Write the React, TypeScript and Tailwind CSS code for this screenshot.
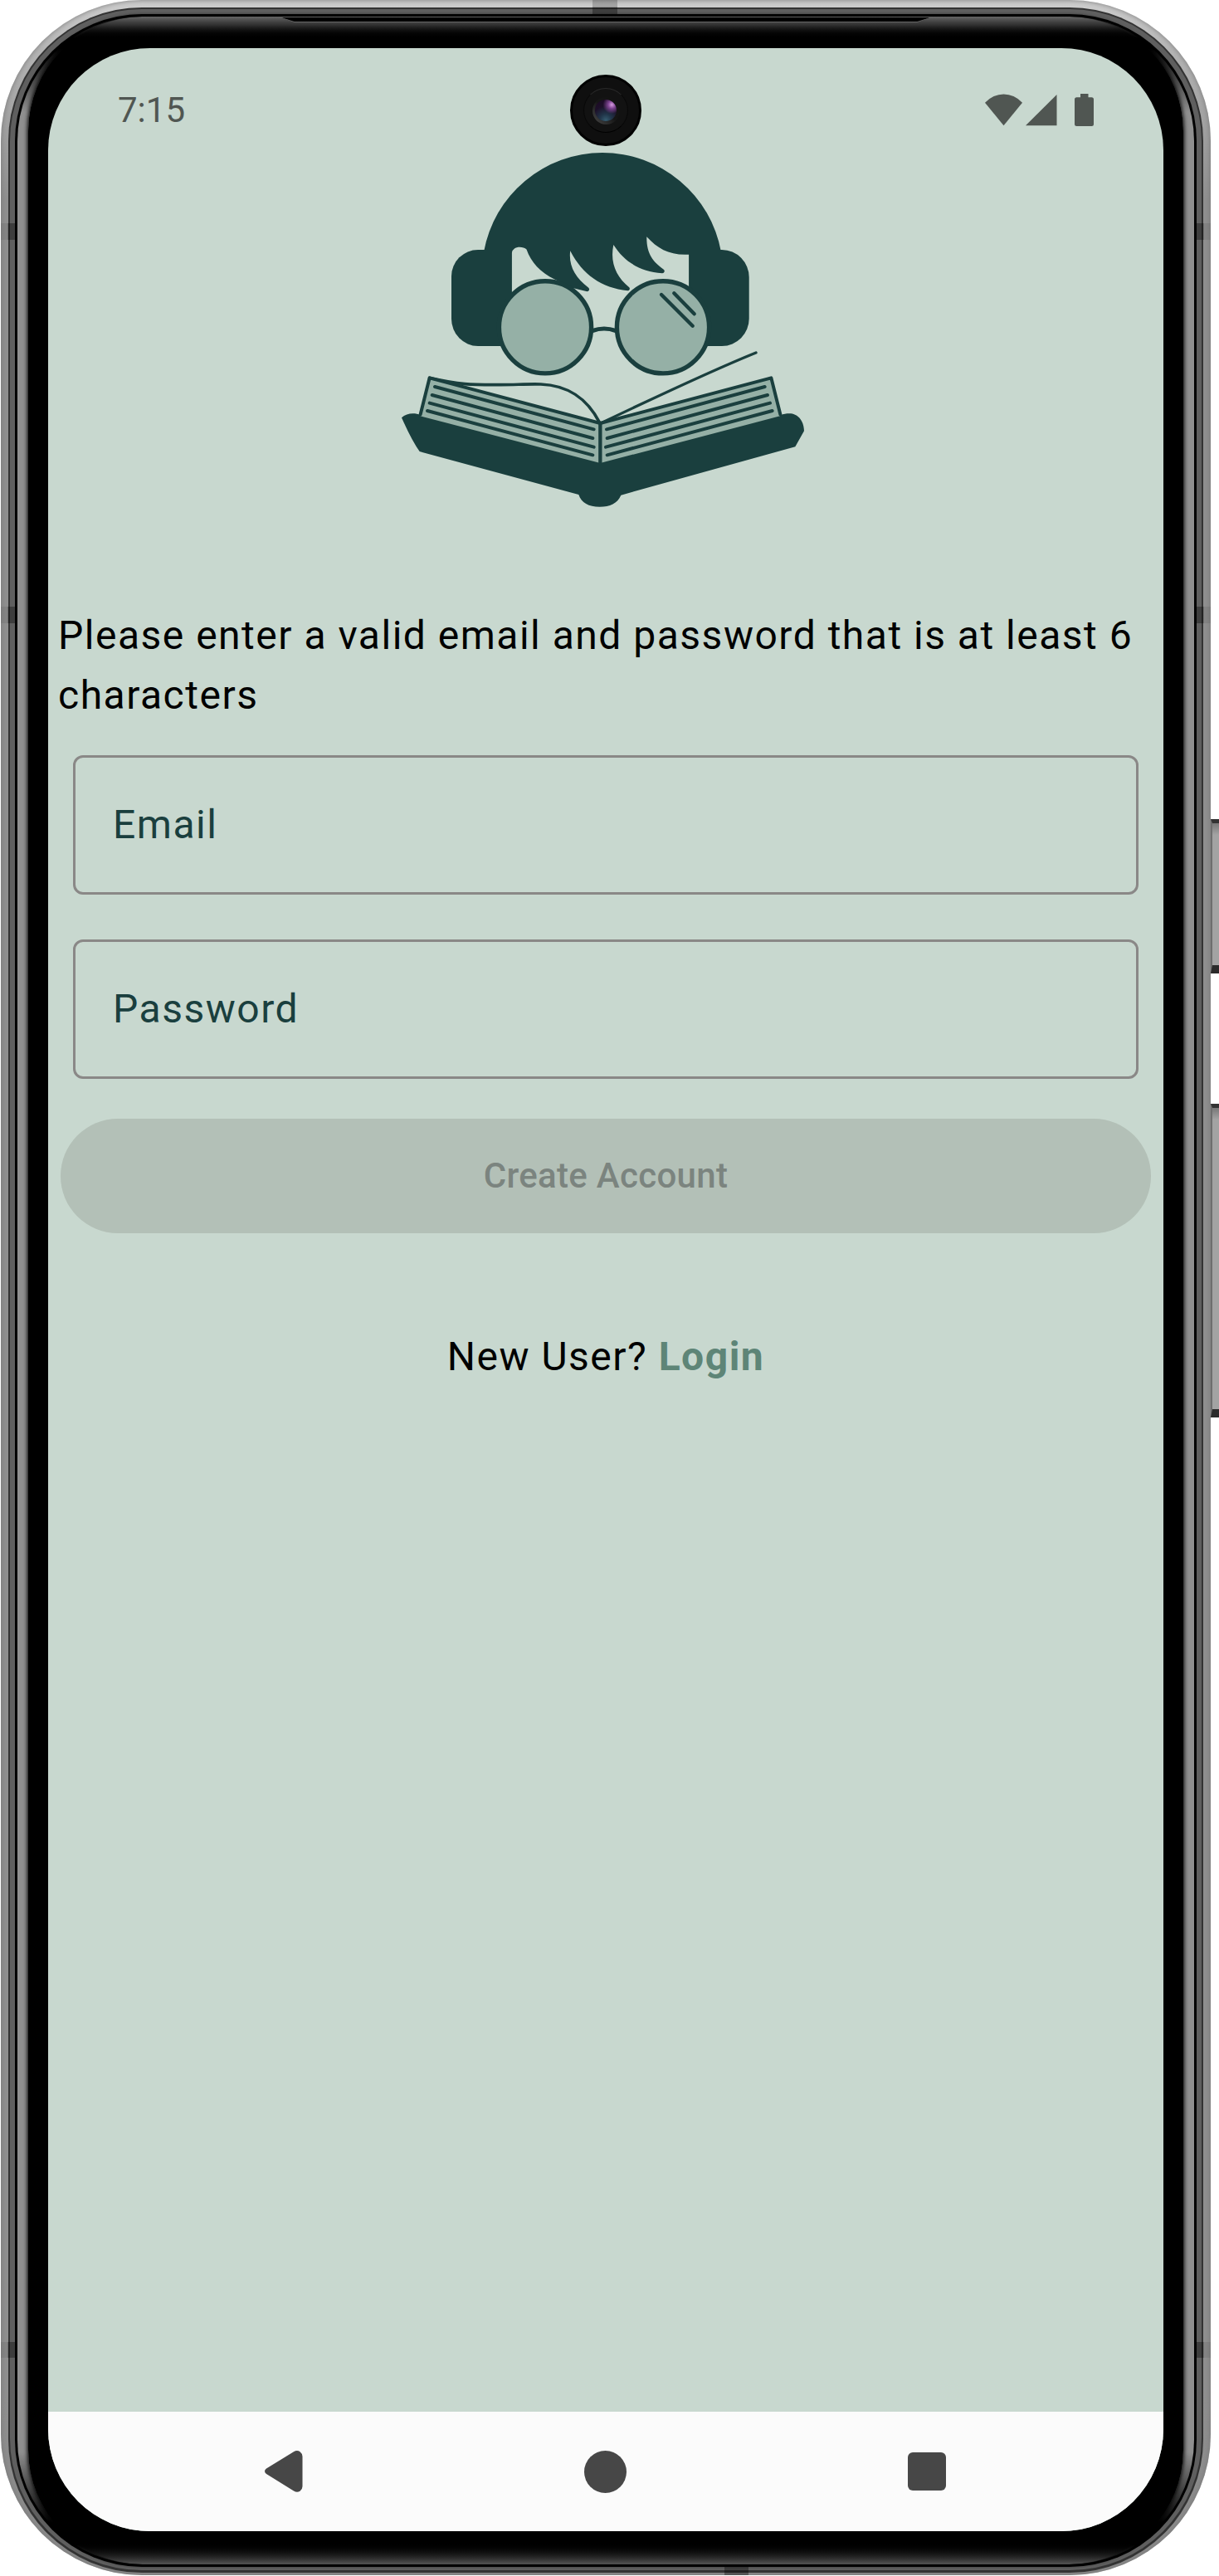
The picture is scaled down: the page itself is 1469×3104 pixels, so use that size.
import React from "react";

const INK = "#1a3f3e";
const PAGE = "#95b0a6";

function ReaderLogo() {
  return (
    <svg className="block h-[450px] w-[520px]" viewBox="470 170 520 450" fill="none">
      <g fill={INK}>
        <path d="M583 303.600A145.3 145.3 0 0 1 869 303.600L869 345H830.3V306.7C807 308 793 300 779.3 285.3C779 306 787 315 799.5 324.5A2.6 2.6 0 0 1 798 329.3C771 327 753 316 739.3 295C735 316 742 333 758.5 346.5A2.5 2.5 0 0 1 756.5 350.3C725 347 702 331 687.2 302.3C685 320 693 334 709 346.5A2.6 2.6 0 0 1 707.5 351.2L690 347L668.3 336.5C651 328 640 316 634.5 300.5C631 297 623 297 620 299.5Q617 301.500 616.7 305V355H583Z" />
        <path d="M576 301H616.7V417H576A32 33 0 0 1 544 384V333A32 32 0 0 1 576 301Z" />
        <path d="M830.3 301H870A33 33 0 0 1 902.700 334V384A33 33 0 0 1 870 417H830.3Z" />
      </g>
      <g stroke={INK} strokeLinecap="round">
        <circle cx="657" cy="394.3" r="55.6" fill={PAGE} strokeWidth="5.4" />
        <circle cx="799" cy="394.3" r="55.6" fill={PAGE} strokeWidth="5.4" />
        <path d="M714 398.500Q728 393.500 742 398.500" strokeWidth="5.2" />
        <path d="M797 355L834.700 392.700M812.300 353.300L836.700 378.300" strokeWidth="4.4" />
      </g>
      <g transform="translate(470 410) scale(.33333)" stroke={INK} strokeLinecap="round" strokeLinejoin="round">
        <path
          d="M42 280C60 262 90 262 110 270L760 440L1412 270C1425 265 1440 264 1450 265C1480 270 1496 295 1497 328L1465 385L835 560C822 590 795 602 758 602C718 602 692 588 682 558L107 402Q80 365 42 280Z"
          fill={INK}
          stroke="none"
        />
        <path d="M143 137L760 302V444L110 274Z" fill={PAGE} stroke="none" />
        <path d="M1377 137L760 302V444L1410 274Z" fill={PAGE} stroke="none" />
        <path d="M110 268L143 136L760 300L1378 136L1411 268" strokeWidth="12" />
        <path d="M760 300V444" strokeWidth="13" />
        <path
          d="M162 168L737 322M152 198L733 354M143 227L737 386M135 255L733 415M783 322L1355 168M785 354L1365 198M780 386L1374 227M785 415L1382 255"
          strokeWidth="12"
        />
        <path d="M143 136C260 163 300 161 400 161C470 160 500 158 545 159C640 163 710 205 758 298" strokeWidth="11" />
        <path d="M762 300C850 258 1150 115 1323 45" strokeWidth="10" />
      </g>
    </svg>
  );
}

function Camera() {
  return (
    <div className="absolute left-[629px] top-[32px] flex size-[86px] items-center justify-center rounded-full border-[3px] border-black bg-[#0f0f0f]">
      <div className="flex size-[54px] items-center justify-center rounded-full border border-x-[#080808] border-b-black border-t-[#292929] bg-[#121212]">
        <div className="flex size-[33px] items-center justify-center rounded-full bg-[linear-gradient(45deg,#4a4a4a,#161616_50%,#101010)]">
          <div className="size-[26px] rounded-full bg-[radial-gradient(circle_at_78%_24%,#d79be0_0%,#7c4390_16%,transparent_38%),radial-gradient(circle_at_50%_95%,#365c70_0%,#21364a_25%,#1d1029_60%,#1c0824_100%)]" />
        </div>
      </div>
    </div>
  );
}

function StatusBar() {
  return (
    <div className="flex h-[112px] shrink-0 items-start justify-between pl-[84px] pr-[83px]">
      <span className="mt-[50px] text-[42px] leading-[50px] text-[#505652]">7:15</span>
      <svg className="mt-[52px] h-[44px] w-[134px]" viewBox="1185 110 134 44" fill="#505652">
        <path d="M1187 123.700Q1197 113.600 1209.500 113.600T1232 123.700L1209.500 151.300Z" />
        <path d="M1236 151.300L1273.500 114V151.300Z" />
        <path d="M1302 113H1311.500V117.200H1315.500Q1318 117.200 1318 119.700V149.500Q1318 152 1315.500 152H1297.500Q1295 152 1295 149.500V119.700Q1295 117.200 1297.500 117.200H1302Z" />
      </svg>
    </div>
  );
}

function Field({ label }: { label: string }) {
  return (
    <div className="mx-[30px] flex h-[168px] items-center rounded-[12px] border-[3px] border-[#8a8887] pl-[45px]">
      <span className="text-[48px] leading-[72px] tracking-[1.5px] text-[#1a3f3e]">{label}</span>
    </div>
  );
}

function NavBar() {
  return (
    <div className="flex h-[144px] shrink-0 items-center justify-between bg-[#fbfbfb] pl-[260px] pr-[262px]">
      <svg className="h-[52px] w-[48px]" viewBox="0 0 48 52" fill="#474747">
        <path d="M3 22.500L36 2.200Q40 0 43.500 2.200Q46.500 4.500 46.500 8V44Q46.500 47.500 43.500 49.700Q40 52 36 49.500L3 29Q-1 25.700 3 22.500Z" />
      </svg>
      <div className="mr-[2px] size-[51px] rounded-full bg-[#474747]" />
      <div className="size-[46px] rounded-[6px] bg-[#474747]" />
    </div>
  );
}

function SideKey({ className }: { className: string }) {
  return (
    <div
      className={
        "absolute left-[1459px] w-[12px] border-b-[10px] border-l-2 border-t-[5px] border-b-[#2b2b2b] border-l-[#6e6e6e] border-t-[#333] bg-[linear-gradient(to_bottom,#777,#a3a3a3_14px)] " +
        className
      }
    />
  );
}

/* Plastic antenna break that crosses the metal band on one side */
function SideBreaks({ className }: { className: string }) {
  return (
    <>
      <div className={"absolute top-[269px] h-[20px] w-[17px] " + className} />
      <div className={"absolute top-[731px] h-[20px] w-[17px] " + className} />
      <div className={"absolute top-[2822px] h-[19px] w-[17px] " + className} />
    </>
  );
}

export default function App() {
  return (
    <div className="relative h-[3104px] w-[1469px] overflow-hidden bg-white font-['Roboto',sans-serif]">
      <SideKey className="top-[987px] h-[186px]" />
      <SideKey className="top-[1330px] h-[378px]" />

      {/* Metal band */}
      <div className="relative ml-px h-[3103px] w-[1458px] overflow-hidden rounded-[170px] bg-[linear-gradient(to_bottom,#cfcfcf,#b5b5b5_60px,#8f8f8f_240px,#8f8f8f_2880px,#8a8a8a)] px-[9px] pb-[3px] pt-[9px] shadow-[inset_0_0_6px_0_#777]">
        <div className="h-full rounded-[161px] bg-[#333] px-[2px] pb-[3px] pt-[2px]">
          <div className="h-full rounded-[159px] bg-[#5f5f5f] px-[6px] pb-[4px] pt-[6px]">
            <div className="h-full rounded-[153px] bg-black p-[3px]">
              {/* Glass edge highlight, fading out at the corners */}
              <div className="h-full rounded-[150px] bg-[linear-gradient(to_bottom,#666,#505050_10px,#161616_20px,#000_26px,#000_38px,#8f8f8f_115px,#8f8f8f_2935px,#000_3020px,#000_3046px,#202020_3054px,#505050_3068px)] px-[13px]">
                <div className="h-full rounded-[138px] bg-[linear-gradient(to_bottom,transparent,black_26px,black_3044px,transparent)] px-[24px] pb-[40px] pt-[38px] shadow-[0_0_5px_1px_#000]">
                  <div className="relative flex h-full flex-col overflow-hidden rounded-[123px] bg-[#c8d8cf]">
                    <StatusBar />
                    <div className="flex justify-center">
                      <ReaderLogo />
                    </div>
                    <p className="mt-[110px] pl-[12px] pr-[10px] text-[48px] leading-[72px] tracking-[1.5px] text-black">
                      Please enter a valid email and password that is at least 6 characters
                    </p>
                    <div className="mt-[36px] flex flex-col gap-[54px]">
                      <Field label="Email" />
                      <Field label="Password" />
                    </div>
                    <button className="mx-[15px] mt-[48px] flex h-[138px] shrink-0 items-center justify-center rounded-full bg-[#b3c0b7] text-[42px] font-medium leading-[60px] tracking-[0.3px] text-[#7b847f]">
                      Create Account
                    </button>
                    <p className="mt-[113px] text-center text-[48px] leading-[72px] tracking-[1.5px] text-black">
                      New User? <span className="font-bold text-[#5e8577]">Login</span>
                    </p>
                    <div className="grow" />
                    <NavBar />
                    <Camera />
                  </div>
                </div>
              </div>
            </div>
          </div>
        </div>

        {/* Earpiece slit */}
        <div className="absolute left-[338px] top-[21px] h-[6px] w-[782px] bg-[#666] [clip-path:polygon(0_0,100%_0,98%_100%,2%_100%)]">
          <div className="h-[5px] bg-black [clip-path:polygon(0_0,100%_0,98%_100%,2%_100%)]" />
        </div>

        {/* Antenna breaks */}
        <SideBreaks className="left-0 bg-[linear-gradient(to_right,rgba(0,0,0,0.08)_8px,rgba(0,0,0,0.35)_9px)]" />
        <SideBreaks className="right-0 bg-[linear-gradient(to_left,rgba(0,0,0,0.08)_8px,rgba(0,0,0,0.35)_9px)]" />
        <div className="absolute left-[713px] top-0 h-[18px] w-[30px] bg-[linear-gradient(to_bottom,rgba(0,0,0,0.2)_8px,rgba(0,0,0,0.35)_9px)]" />
        <div className="absolute bottom-0 left-[872px] h-[10px] w-[29px] bg-black/35" />
      </div>
    </div>
  );
}
